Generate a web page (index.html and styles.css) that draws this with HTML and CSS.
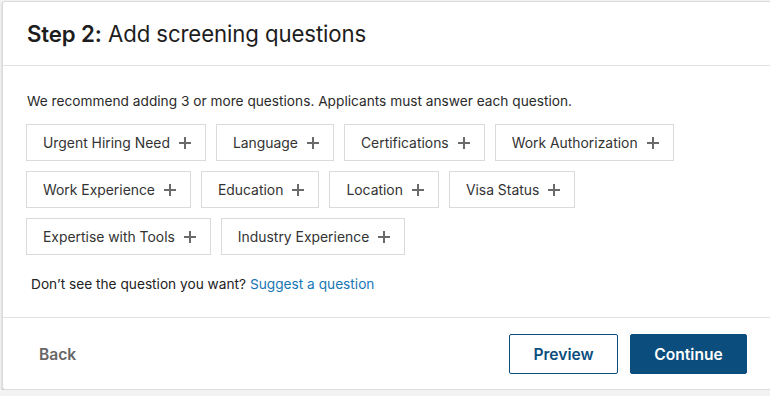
FILE: index.html
```html
<!DOCTYPE html>
<html lang="en">
<head>
    <meta charset="UTF-8">
    <meta name="viewport" content="width=device-width, initial-scale=1.0">
    <title>Screening Questions</title>
    <link rel="stylesheet" href="styles.css">
</head>
<body>
    <div class="card">
        <div class="card-header">
            <h1><strong>Step 2:</strong> Add screening questions</h1>
        </div>

        <div class="card-body">
            <p class="intro">We recommend adding 3 or more questions. Applicants must answer each question.</p>

            <div class="chips">
                <div class="chip-row">
                    <button class="chip">Urgent Hiring Need <span class="plus"></span></button>
                    <button class="chip">Language <span class="plus"></span></button>
                    <button class="chip">Certifications <span class="plus"></span></button>
                    <button class="chip">Work Authorization <span class="plus"></span></button>
                </div>
                <div class="chip-row">
                    <button class="chip">Work Experience <span class="plus"></span></button>
                    <button class="chip">Education <span class="plus"></span></button>
                    <button class="chip">Location <span class="plus"></span></button>
                    <button class="chip">Visa Status <span class="plus"></span></button>
                </div>
                <div class="chip-row">
                    <button class="chip">Expertise with Tools <span class="plus"></span></button>
                    <button class="chip">Industry Experience <span class="plus"></span></button>
                </div>
            </div>

            <p class="suggest">Don’t see the question you want? <a href="#">Suggest a question</a></p>
        </div>

        <div class="card-footer">
            <button class="btn-back">Back</button>
            <div class="actions">
                <button class="btn-secondary">Preview</button>
                <button class="btn-primary">Continue</button>
            </div>
        </div>
    </div>
</body>
</html>
```

FILE: styles.css
```css
* {
    margin: 0;
    padding: 0;
    box-sizing: border-box;
}

body {
    font-family: Inter, "Liberation Sans", sans-serif;
    background: #f3f3f3;
    color: #222;
    overflow: hidden;
}

.card {
    width: 770px;
    margin: 1px 0 0 2px;
    background: white;
    border: 1px solid #dcdcdc;
    border-radius: 3px;
    box-shadow: 0 1px 2px rgba(0, 0, 0, 0.25);
}

.card-header {
    height: 64px;
    padding: 0 24px;
    display: flex;
    align-items: center;
    border-bottom: 1px solid #e2e2e2;
}

.card-header h1 {
    font-size: 22.2px;
    font-weight: 400;
    color: #1d1d1d;
    letter-spacing: -0.1px;
}

.card-header strong {
    font-weight: 600;
}

.card-body {
    padding: 25px 24px 23px 23px;
}

.intro {
    margin-left: 1px;
    font-size: 13.7px;
    line-height: 20px;
    color: #2a2a2a;
    margin-bottom: 13px;
}

.chips {
    display: flex;
    flex-direction: column;
    gap: 10px;
}

.chip-row {
    display: flex;
    gap: 10px;
}

.chip {
    height: 37px;
    display: flex;
    align-items: center;
    gap: 9px;
    padding: 0 14px 0 16px;
    background: white;
    border: 1px solid #dadada;
    font-family: inherit;
    font-size: 13.9px;
    color: #333;
    cursor: pointer;
}

.plus {
    position: relative;
    width: 12px;
    height: 12px;
}

.plus::before,
.plus::after {
    content: "";
    position: absolute;
    background: #6a6a6a;
}

.plus::before {
    left: 5px;
    top: 0;
    width: 2px;
    height: 12px;
}

.plus::after {
    left: 0;
    top: 5px;
    width: 12px;
    height: 2px;
}

.suggest {
    margin: 19px 0 0 5px;
    font-size: 13.7px;
    line-height: 20px;
    color: #222;
}

.suggest a {
    color: #1877b4;
    text-decoration: none;
}

.card-footer {
    display: flex;
    justify-content: space-between;
    align-items: center;
    padding: 16px 24px 15px;
    border-top: 1px solid #e2e2e2;
}

.card-footer button {
    height: 40px;
    font-family: inherit;
    font-size: 15.6px;
    font-weight: 600;
    border-radius: 2px;
    cursor: pointer;
}

.btn-back {
    padding: 0 12px;
    background: none;
    border: none;
    color: #666;
}

.actions {
    display: flex;
    gap: 12px;
}

.btn-secondary {
    width: 109px;
    background: white;
    border: 1px solid #0b4e7e;
    color: #0b4e7e;
}

.btn-primary {
    width: 117px;
    background: #0b4e7e;
    border: 1px solid #0b4e7e;
    color: white;
}
```
